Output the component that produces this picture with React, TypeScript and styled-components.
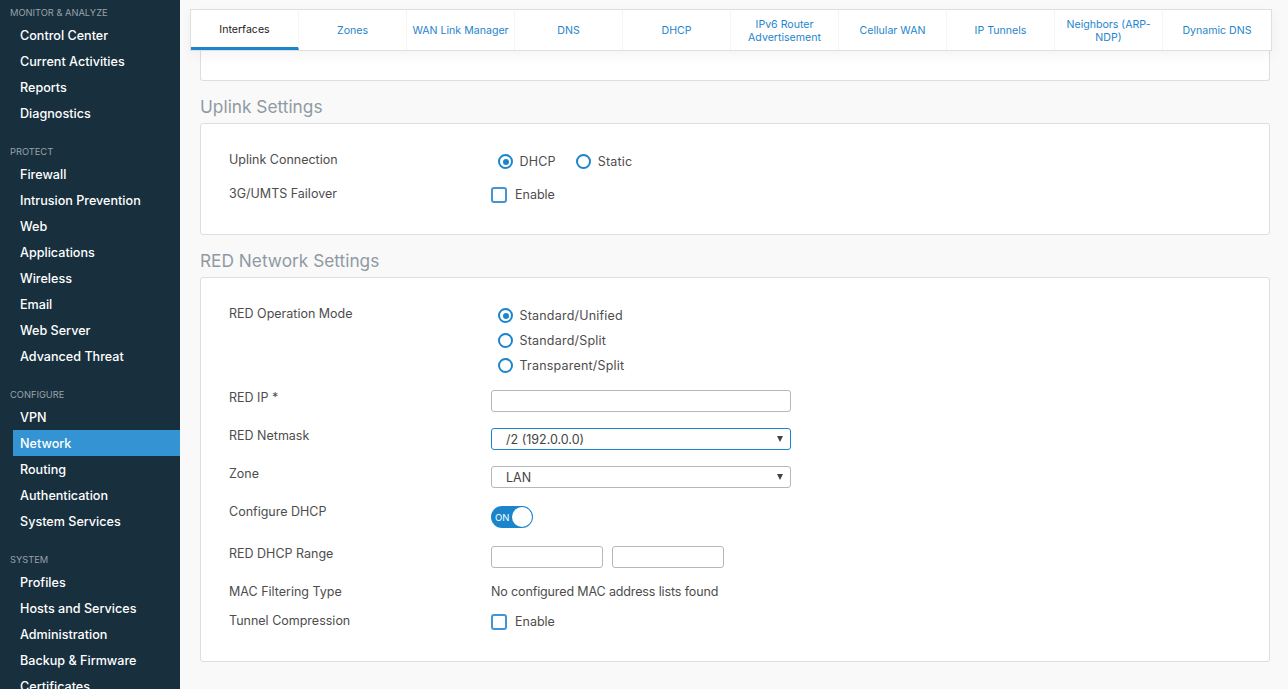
import React from 'react';
import styled, { createGlobalStyle } from 'styled-components';

const FONT = `Inter, "Liberation Sans", sans-serif`;

const Global = createGlobalStyle`
  html, body { margin: 0; padding: 0; height: 100%; overflow: hidden; background: #f9f9f9; }
  #root { height: 689px; }
  * { box-sizing: border-box; }
`;

const Page = styled.div`
  display: flex;
  width: 1288px;
  height: 689px;
  overflow: hidden;
  font-family: ${FONT};
  font-size: 12.5px;
  color: #4d4d4d;
`;

const Sidebar = styled.nav`
  flex: 0 0 180px;
  height: 689px;
  overflow: hidden;
  background: #182f3e;
  padding-top: 2px;
`;

const NavGroup = styled.div`
  margin-bottom: 15px;
`;

const NavTitle = styled.div`
  height: 20px;
  line-height: 22px;
  padding-left: 10px;
  font-size: 9.3px;
  color: #98a2a9;
`;

const NavItem = styled.a<{ $active?: boolean }>`
  display: block;
  height: 26px;
  line-height: 28px;
  margin-left: 13px;
  padding-left: 7px;
  font-size: 12.6px;
  font-weight: 500;
  color: #ffffff;
  background: ${p => (p.$active ? '#3393d3' : 'transparent')};
`;

const Main = styled.main`
  flex: 1;
  min-width: 0;
  padding: 9px 16px 0 10px;
`;

const Tabs = styled.div`
  position: relative;
  z-index: 1;
  display: flex;
  width: 1082px;
  height: 42px;
  background: #fff;
  border: 1px solid #dfdfdf;
  border-bottom-width: 1.5px;
  box-shadow: 0 5px 12px rgba(0, 0, 0, 0.045);
`;

const Tab = styled.a<{ $active?: boolean }>`
  flex: 0 0 108px;
  display: flex;
  align-items: center;
  justify-content: center;
  padding: ${p => (p.$active ? '2px 0 0' : '2px 4px 0')};
  text-align: center;
  font-size: 10.6px;
  line-height: 13.5px;
  color: ${p => (p.$active ? '#222' : '#1f85cc')};
  border-right: 1px solid #f5f5f5;
  border-bottom: ${p => (p.$active ? '3px solid #1b85cc' : '0')};
  &:last-child { border-right: 0; }
`;

const Content = styled.div`
  width: 1070px;
  margin-left: 10px;
`;

const Card = styled.section<{ $height: number }>`
  height: ${p => p.$height}px;
  background: #fff;
  border: 1px solid #dedede;
  border-radius: 3px;
  padding: 24px 0 0 28px;
`;

const StubCard = styled.div`
  height: 30px;
  background: #fff;
  border: 1px solid #dedede;
  border-top: 0;
  border-radius: 0 0 3px 3px;
`;

const Heading = styled.h2<{ $top: number; $bottom: number }>`
  margin: ${p => p.$top}px 0 ${p => p.$bottom}px;
  height: 26px;
  line-height: 26px;
  font-size: 17.3px;
  font-weight: 400;
  color: #8f99a3;
`;

const Row = styled.div<{ $height: number }>`
  display: grid;
  grid-template-columns: 262px 1fr;
  height: ${p => p.$height}px;
`;

const Label = styled.div`
  line-height: 24px;
  color: #4d4d4d;
`;

const Value = styled.div<{ $top?: number; $gap?: number }>`
  display: flex;
  align-items: flex-start;
  gap: ${p => p.$gap ?? 0}px;
  padding-top: ${p => p.$top ?? 0}px;
`;

const Stack = styled.div`
  display: flex;
  flex-direction: column;
  padding: 1px 0 0 7px;
`;

const Inline = styled.div`
  display: flex;
  padding: 1px 0 0 7px;
  gap: 20.5px;
`;

const RadioLine = styled.label`
  display: flex;
  align-items: center;
  height: 25px;
  gap: 6.5px;
  letter-spacing: 0.2px;
`;

const RadioMark = styled.span<{ $on?: boolean }>`
  width: 15px;
  height: 15px;
  border-radius: 50%;
  border: 2.4px solid #1b85cc;
  background: #fff;
  display: flex;
  align-items: center;
  justify-content: center;
  &::after {
    content: '';
    display: ${p => (p.$on ? 'block' : 'none')};
    width: 6px;
    height: 6px;
    border-radius: 50%;
    background: #1b85cc;
  }
`;

const CheckLine = styled.label`
  display: flex;
  align-items: center;
  height: 25px;
  gap: 8px;
`;

const CheckMark = styled.span`
  width: 16px;
  height: 16px;
  border: 2px solid #4593d4;
  border-radius: 3px;
  background: #fff;
`;

const TextInput = styled.input<{ $width: number }>`
  width: ${p => p.$width}px;
  height: 22px;
  padding: 0 14px;
  background: #fff;
  border: 1px solid #b4b8bc;
  border-radius: 3px;
  outline: 0;
  font: inherit;
`;

const SelectBox = styled.div<{ $focus?: boolean }>`
  position: relative;
  width: 300px;
  height: 22px;
  line-height: 22px;
  padding-left: 14px;
  background: #fff;
  border: 1px solid ${p => (p.$focus ? '#1b85cc' : '#b4b8bc')};
  border-radius: 3px;
  color: #444;
  &::after {
    content: '';
    position: absolute;
    right: 7px;
    top: 7px;
    border-left: 3px solid transparent;
    border-right: 3px solid transparent;
    border-top: 6px solid #444;
  }
`;

const Toggle = styled.div`
  display: flex;
  align-items: center;
  justify-content: space-between;
  width: 42px;
  height: 22px;
  padding: 0 1px 0 4px;
  border-radius: 11px;
  background: #1b85cc;
  color: #fff;
  font-size: 9.5px;
`;

const Knob = styled.span`
  width: 20px;
  height: 20px;
  border-radius: 50%;
  background: #fff;
`;

const Plain = styled.div`
  line-height: 24px;
  letter-spacing: -0.13px;
`;

const nav = [
  { title: 'MONITOR & ANALYZE', items: ['Control Center', 'Current Activities', 'Reports', 'Diagnostics'] },
  { title: 'PROTECT', items: ['Firewall', 'Intrusion Prevention', 'Web', 'Applications', 'Wireless', 'Email', 'Web Server', 'Advanced Threat'] },
  { title: 'CONFIGURE', items: ['VPN', 'Network', 'Routing', 'Authentication', 'System Services'] },
  { title: 'SYSTEM', items: ['Profiles', 'Hosts and Services', 'Administration', 'Backup & Firmware', 'Certificates'] },
];

const tabs = ['Interfaces', 'Zones', 'WAN Link Manager', 'DNS', 'DHCP', 'IPv6 Router Advertisement', 'Cellular WAN', 'IP Tunnels', 'Neighbors (ARP-NDP)', 'Dynamic DNS'];

const Radio = ({ on, children }: { on?: boolean; children: React.ReactNode }) => (
  <RadioLine><RadioMark $on={on} />{children}</RadioLine>
);

const Check = () => (
  <CheckLine><CheckMark />Enable</CheckLine>
);

export default function App() {
  return (
    <Page>
      <Global />
      <Sidebar>
        {nav.map(g => (
          <NavGroup key={g.title}>
            <NavTitle>{g.title}</NavTitle>
            {g.items.map(i => <NavItem key={i} $active={i === 'Network'}>{i}</NavItem>)}
          </NavGroup>
        ))}
      </Sidebar>
      <Main>
        <Tabs>
          {tabs.map((t, i) => <Tab key={t} $active={i === 0}>{t}</Tab>)}
        </Tabs>
        <Content>
          <StubCard />
          <Heading $top={13} $bottom={3}>Uplink Settings</Heading>
          <Card $height={112}>
            <Row $height={34}>
              <Label>Uplink Connection</Label>
              <Inline>
                <Radio on>DHCP</Radio>
                <Radio>Static</Radio>
              </Inline>
            </Row>
            <Row $height={34}>
              <Label>3G/UMTS Failover</Label>
              <Value><Check /></Value>
            </Row>
          </Card>
          <Heading $top={13} $bottom={3}>RED Network Settings</Heading>
          <Card $height={385}>
            <Row $height={84}>
              <Label>RED Operation Mode</Label>
              <Stack>
                <Radio on>Standard/Unified</Radio>
                <Radio>Standard/Split</Radio>
                <Radio>Transparent/Split</Radio>
              </Stack>
            </Row>
            <Row $height={38}>
              <Label>RED IP *</Label>
              <Value $top={4}><TextInput $width={300} /></Value>
            </Row>
            <Row $height={38}>
              <Label>RED Netmask</Label>
              <Value $top={4}><SelectBox $focus>/2 (192.0.0.0)</SelectBox></Value>
            </Row>
            <Row $height={38}>
              <Label>Zone</Label>
              <Value $top={4}><SelectBox>LAN</SelectBox></Value>
            </Row>
            <Row $height={42}>
              <Label>Configure DHCP</Label>
              <Value $top={6}><Toggle>ON<Knob /></Toggle></Value>
            </Row>
            <Row $height={38}>
              <Label>RED DHCP Range</Label>
              <Value $top={4} $gap={9}><TextInput $width={112} /><TextInput $width={112} /></Value>
            </Row>
            <Row $height={29}>
              <Label>MAC Filtering Type</Label>
              <Plain>No configured MAC address lists found</Plain>
            </Row>
            <Row $height={30}>
              <Label>Tunnel Compression</Label>
              <Value><Check /></Value>
            </Row>
          </Card>
        </Content>
      </Main>
    </Page>
  );
}
